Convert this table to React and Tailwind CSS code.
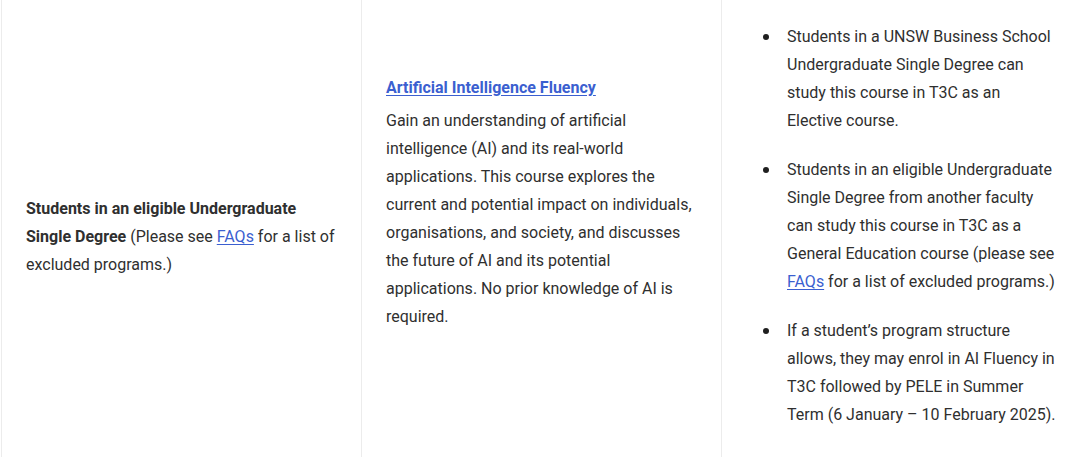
export default function App() {
  const font = { fontFamily: 'Roboto, "Noto Sans", sans-serif' };
  const dot = 'mt-[11px] ml-[17px] mr-[18px] h-[6px] w-[6px] shrink-0 rounded-full bg-[#1f1f1f]';
  return (
    <div className="h-[457px] overflow-hidden bg-white pl-px text-[16px] leading-[28px] text-[#2f2f2f]" style={font}>
      <div className="flex h-full">
        <div className="w-[360px] shrink-0 border-l border-[#ececec] px-6 pt-[195px]">
          <p>
            <strong className="font-bold">Students in an eligible Undergraduate Single Degree</strong> (Please see{' '}
            <a href="#" className="text-[#3b5fd0] underline underline-offset-2">FAQs</a> for a list of excluded programs.)
          </p>
        </div>

        <div className="w-[360px] shrink-0 border-l border-[#ececec] px-6 pt-[74px]">
          <a href="#" className="block font-bold text-[#3b5fd0] underline underline-offset-2">
            Artificial Intelligence Fluency
          </a>
          <p className="mt-[5px]">
            Gain an understanding of artificial intelligence (AI) and its real-world applications. This course explores the
            current and potential impact on individuals, organisations, and society, and discusses the future of AI and its
            potential applications. No prior knowledge of AI is required.
          </p>
        </div>

        <div className="flex-1 border-l border-[#ececec] pl-6 pr-6 pt-[23px]">
          <ul className="space-y-[21px]">
            <li className="flex">
              <span className={dot} />
              <span>
                Students in a UNSW Business School Undergraduate Single Degree can study this course in T3C as an Elective
                course.
              </span>
            </li>
            <li className="flex">
              <span className={dot} />
              <span>
                Students in an eligible Undergraduate Single Degree from another faculty can study this course in T3C as a
                General Education course (please see{' '}
                <a href="#" className="text-[#3b5fd0] underline underline-offset-2">FAQs</a> for a list of excluded
                programs.)
              </span>
            </li>
            <li className="flex">
              <span className={dot} />
              <span>
                If a student’s program structure allows, they may enrol in AI Fluency in T3C followed by PELE in Summer
                Term (6 January – 10 February 2025).
              </span>
            </li>
          </ul>
        </div>
      </div>
    </div>
  );
}
